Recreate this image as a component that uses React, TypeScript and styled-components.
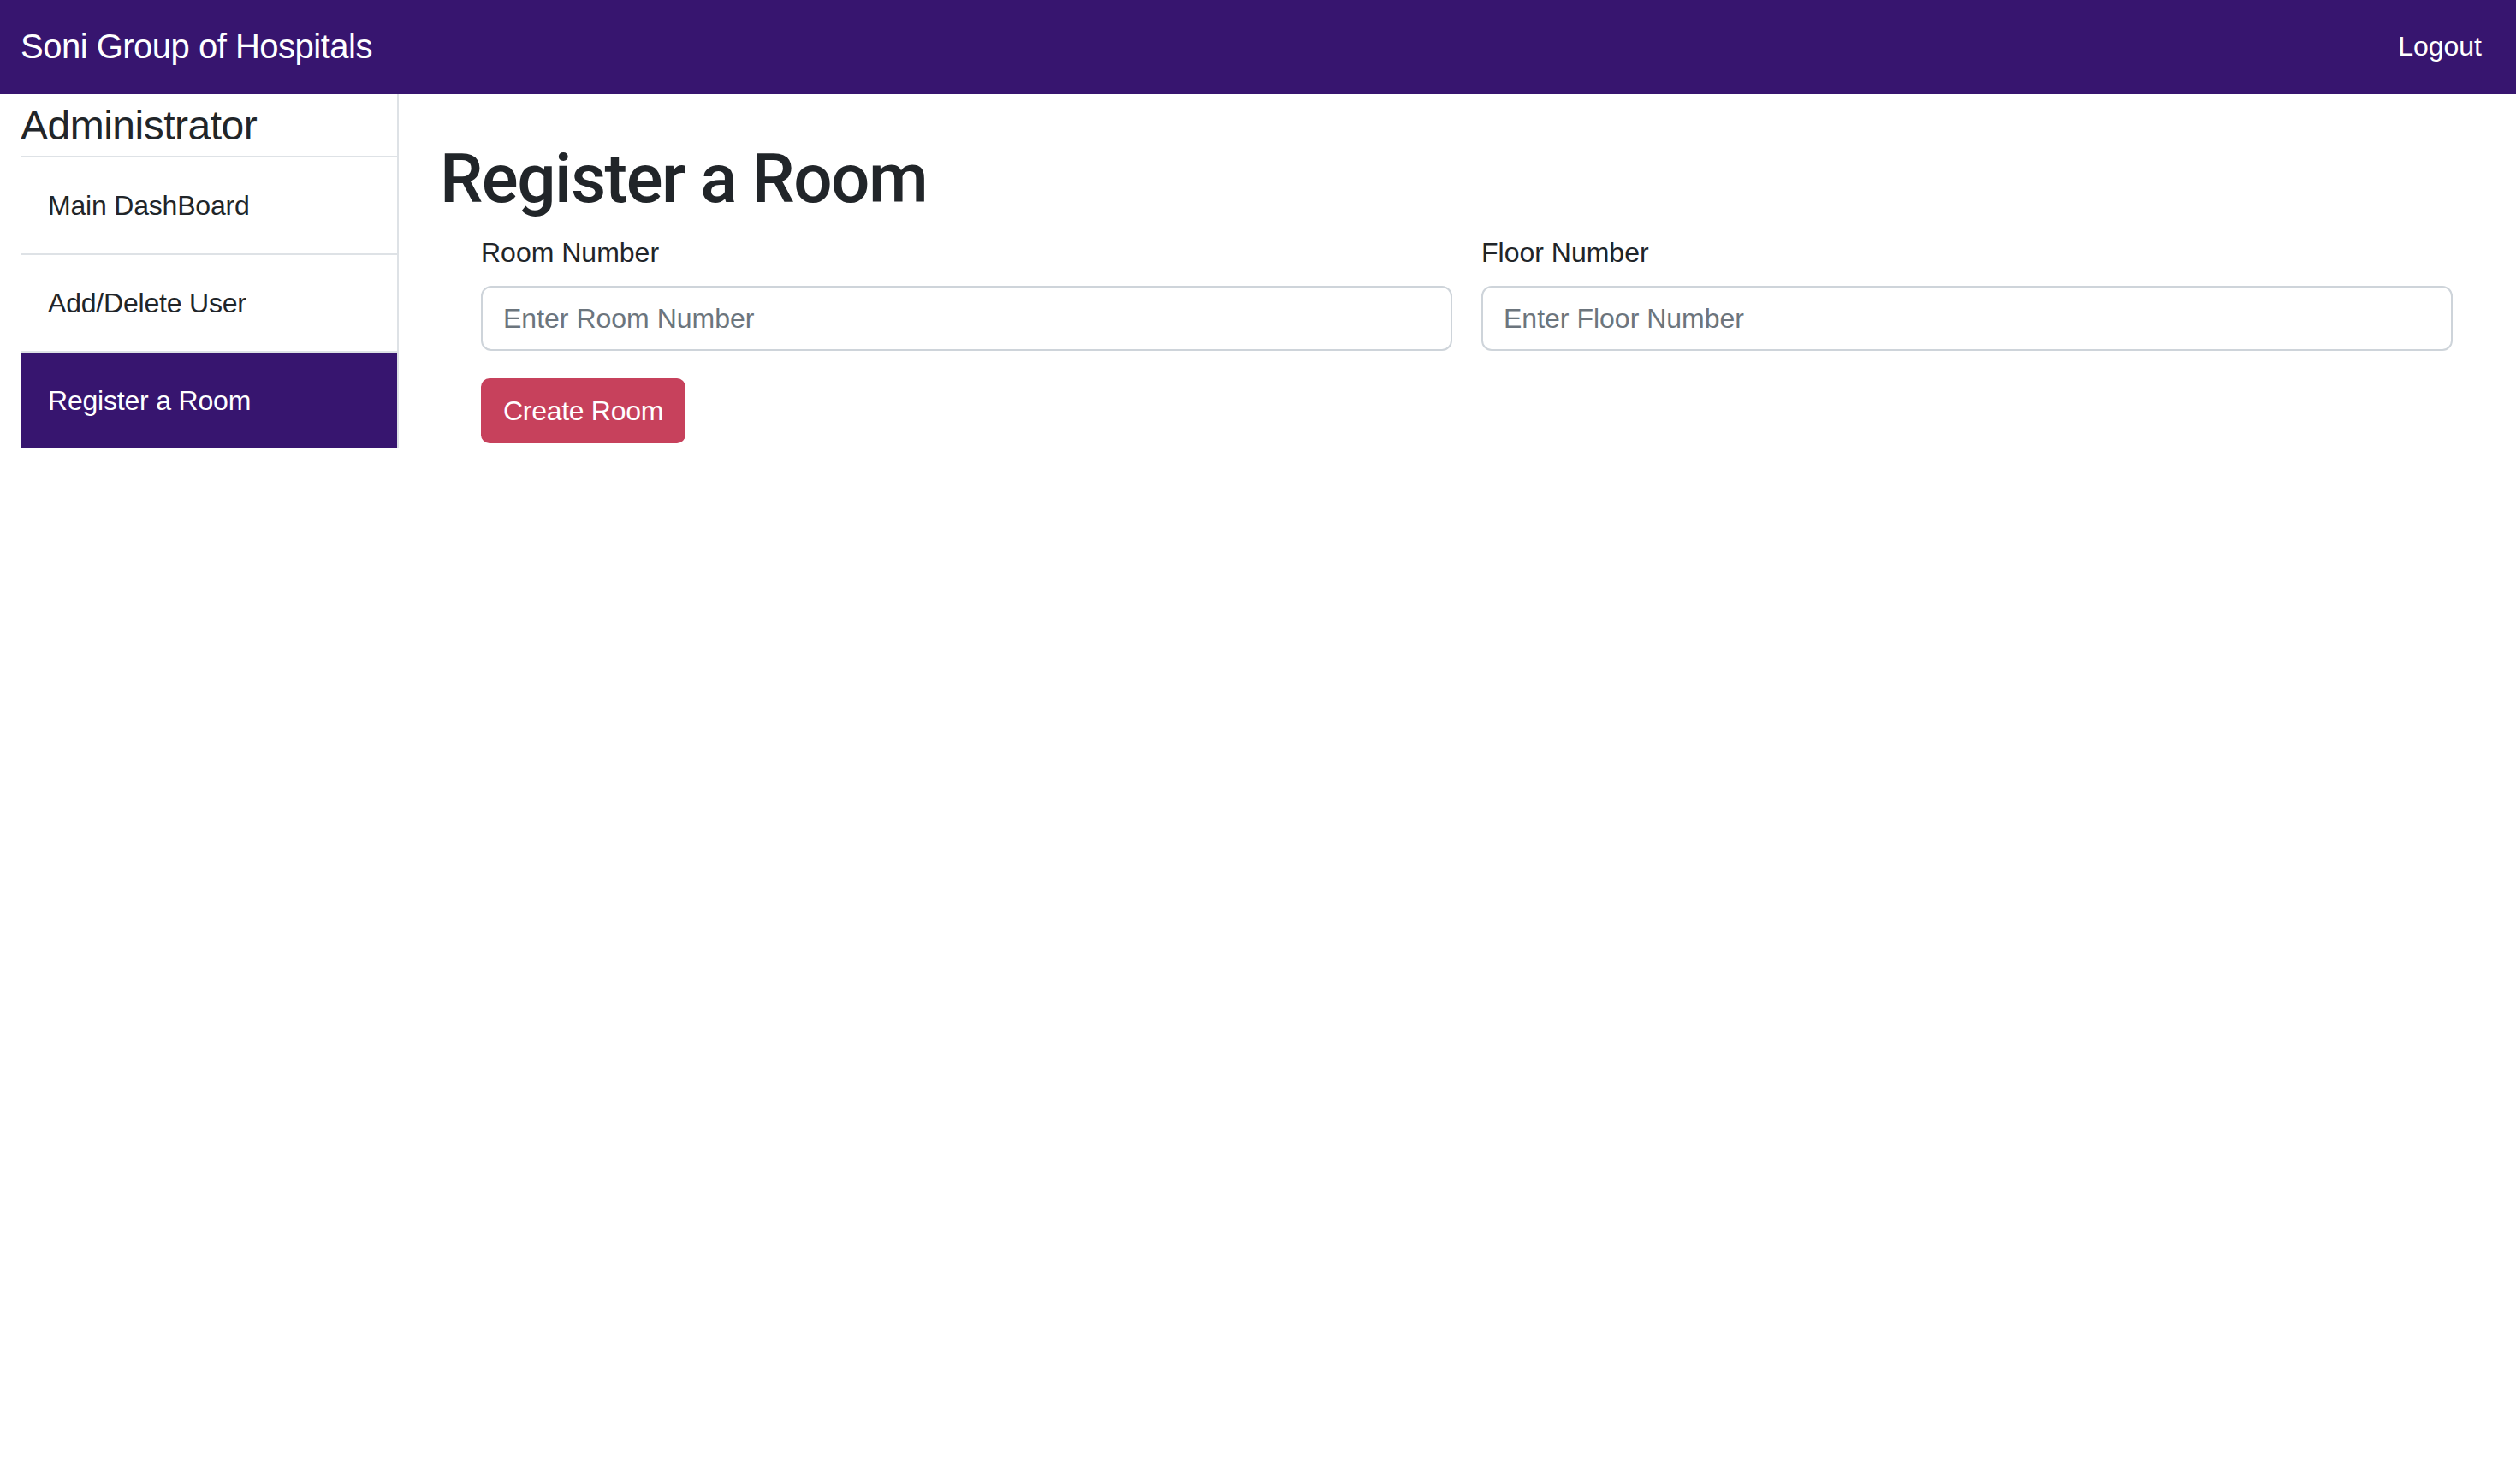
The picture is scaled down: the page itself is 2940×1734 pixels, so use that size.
import React from "react";
import styled, { createGlobalStyle } from "styled-components";

const GlobalStyle = createGlobalStyle`
  html, body {
    margin: 0;
    padding: 0;
    background: #ffffff;
  }
  body {
    font-family: "Liberation Sans", Arial, sans-serif;
    color: #212529;
    font-size: 32px;
    line-height: 48px;
  }
  * { box-sizing: border-box; }
`;

const Page = styled.div`
  min-height: 1734px;
  display: flex;
  flex-direction: column;
`;

const NavBar = styled.header`
  height: 110px;
  background: #37156f;
  display: flex;
  align-items: center;
  justify-content: space-between;
  padding: 0 40px 2px 24px;
`;

const Brand = styled.a`
  color: #ffffff;
  font-size: 40px;
  line-height: 60px;
  letter-spacing: -0.5px;
  text-decoration: none;
`;

const NavLink = styled.a`
  color: #ffffff;
  font-size: 32px;
  line-height: 48px;
  text-decoration: none;
`;

const Body = styled.div`
  display: flex;
  align-items: flex-start;
  padding-left: 24px;
`;

const Sidebar = styled.aside`
  width: 442px;
  flex: 0 0 442px;
  border-right: 2px solid #dee2e6;
  display: flex;
  flex-direction: column;
`;

const SidebarTitle = styled.h4`
  margin: 0 0 6px;
  padding-top: 8px;
  font-size: 48px;
  line-height: 58px;
  font-weight: 400;
  letter-spacing: -0.5px;
`;

const MenuList = styled.nav`
  display: flex;
  flex-direction: column;
`;

const MenuItem = styled.a<{ $active?: boolean }>`
  display: block;
  border-top: 2px solid #dee2e6;
  padding: 32px 32px;
  font-size: 32px;
  line-height: 48px;
  letter-spacing: -0.2px;
  color: ${(p) => (p.$active ? "#ffffff" : "#212529")};
  background: ${(p) => (p.$active ? "#37156f" : "transparent")};
  text-decoration: none;
`;

const Main = styled.main`
  flex: 1;
  padding: 51px 24px 0 48px;
`;

const Title = styled.h1`
  margin: 0 0 14px;
  font-family: Roboto, "Liberation Sans", Arial, sans-serif;
  font-size: 80px;
  line-height: 96px;
  font-weight: 500;
  letter-spacing: -1.5px;
`;

const Form = styled.form`
  padding: 0 50px 0 48px;
  display: flex;
  flex-direction: column;
  align-items: flex-start;
`;

const FieldGrid = styled.div`
  width: 100%;
  display: grid;
  grid-template-columns: 1fr 1fr;
  column-gap: 34px;
  margin-bottom: 32px;
`;

const Field = styled.div`
  display: flex;
  flex-direction: column;
`;

const Label = styled.label`
  font-size: 32px;
  line-height: 48px;
  margin-bottom: 15px;
`;

const Input = styled.input`
  height: 76px;
  width: 100%;
  border: 2px solid #ced4da;
  border-radius: 12px;
  padding: 12px 24px;
  font-family: "Liberation Sans", Arial, sans-serif;
  font-size: 32px;
  line-height: 48px;
  color: #212529;
  background: #ffffff;
  outline: none;
  &::placeholder {
    color: #6c757d;
    opacity: 1;
  }
`;

const SubmitButton = styled.button`
  height: 76px;
  padding: 12px 24px;
  border: 2px solid #c7415c;
  border-radius: 10px;
  background: #c7415c;
  color: #ffffff;
  font-family: "Liberation Sans", Arial, sans-serif;
  font-size: 32px;
  line-height: 48px;
  letter-spacing: -0.3px;
  cursor: pointer;
`;

const menu = [
  { label: "Main DashBoard", active: false },
  { label: "Add/Delete User", active: false },
  { label: "Register a Room", active: true },
];

export default function App() {
  return (
    <Page>
      <GlobalStyle />
      <NavBar>
        <Brand href="#">Soni Group of Hospitals</Brand>
        <NavLink href="#">Logout</NavLink>
      </NavBar>
      <Body>
        <Sidebar>
          <SidebarTitle>Administrator</SidebarTitle>
          <MenuList>
            {menu.map((m) => (
              <MenuItem key={m.label} href="#" $active={m.active}>
                {m.label}
              </MenuItem>
            ))}
          </MenuList>
        </Sidebar>
        <Main>
          <Title>Register a Room</Title>
          <Form onSubmit={(e) => e.preventDefault()}>
            <FieldGrid>
              <Field>
                <Label htmlFor="room">Room Number</Label>
                <Input id="room" placeholder="Enter Room Number" />
              </Field>
              <Field>
                <Label htmlFor="floor">Floor Number</Label>
                <Input id="floor" placeholder="Enter Floor Number" />
              </Field>
            </FieldGrid>
            <SubmitButton type="submit">Create Room</SubmitButton>
          </Form>
        </Main>
      </Body>
    </Page>
  );
}
